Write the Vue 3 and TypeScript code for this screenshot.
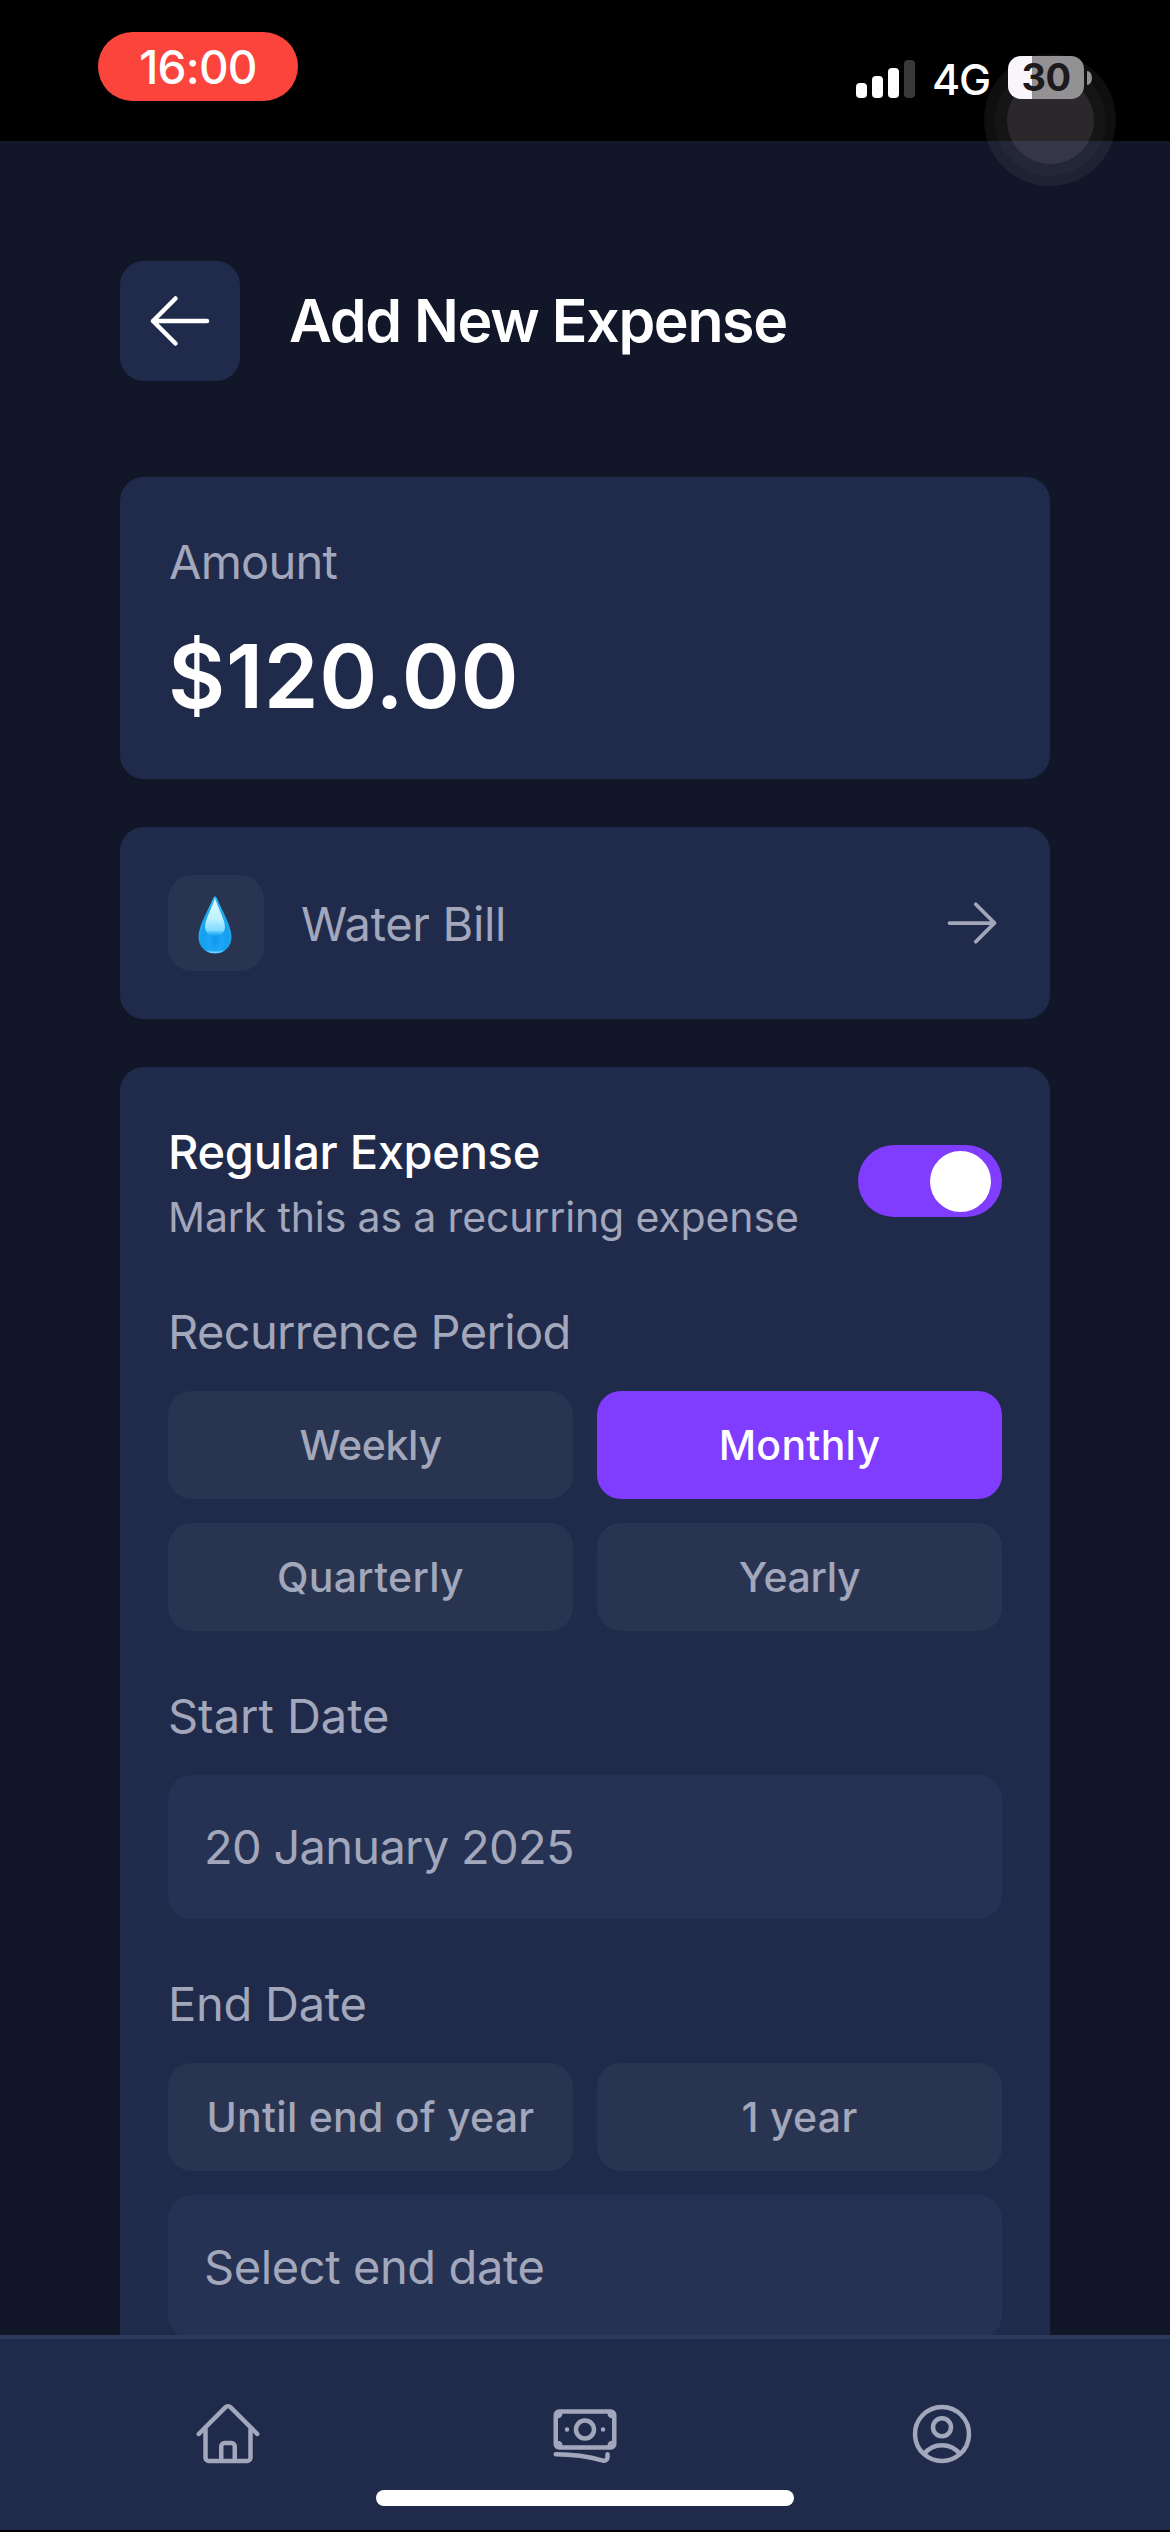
<script setup lang="ts">
import { ref } from 'vue'

interface Option {
  label: string
  tracking: string
}

const periods: Option[] = [
  { label: 'Weekly', tracking: 'snug' },
  { label: 'Monthly', tracking: 'loose' },
  { label: 'Quarterly', tracking: 'loose' },
  { label: 'Yearly', tracking: 'snug' },
]
const endPresets: Option[] = [
  { label: 'Until end of year', tracking: 'loose' },
  { label: '1 year', tracking: 'loose' },
]

const amount = ref('$120.00')
const category = ref('Water Bill')
const recurring = ref(true)
const period = ref('Monthly')
const endPreset = ref('')
const startDate = ref('20 January 2025')
</script>

<template>
  <div class="screen">
    <header class="status">
      <span class="clock">16:00</span>
      <div class="indicators">
        <div class="signal">
          <i class="bar b1"></i>
          <i class="bar b2"></i>
          <i class="bar b3"></i>
          <i class="bar b4"></i>
        </div>
        <span class="network">4G</span>
        <div class="battery"><span>30</span></div>
        <i class="nub"></i>
      </div>
      <div class="touch"><div class="touch-mid"><div class="touch-core"></div></div></div>
    </header>

    <main class="content">
      <div class="heading">
        <button class="back" type="button" aria-label="Back">
          <svg viewBox="0 0 24 24" width="72" height="72">
            <path d="M10.5 19.5 3 12m0 0 7.5-7.5M3 12h18" />
          </svg>
        </button>
        <h1>Add New Expense</h1>
      </div>

      <section class="card amount-card">
        <p class="label t-amount">Amount</p>
        <p class="amount">{{ amount }}</p>
      </section>

      <section class="card category-card">
        <div class="tile">
          <svg viewBox="0 0 36 58" width="36" height="58">
            <defs>
              <radialGradient id="dropBody" cx="0.5" cy="0.76" r="0.62">
                <stop offset="0" stop-color="#0f95ee" />
                <stop offset="0.3" stop-color="#1ba6f8" />
                <stop offset="0.62" stop-color="#14a0ee" />
                <stop offset="1" stop-color="#2bb4f2" />
              </radialGradient>
              <linearGradient id="dropShine" x1="0" y1="0" x2="0" y2="1">
                <stop offset="0" stop-color="#e4f9ff" />
                <stop offset="0.55" stop-color="#bdf1ff" />
                <stop offset="0.85" stop-color="#7fdcff" />
                <stop offset="1" stop-color="#2fb2fb" stop-opacity="0.3" />
              </linearGradient>
              <linearGradient id="dropRim" x1="0" y1="0" x2="0" y2="1">
                <stop offset="0.7" stop-color="#59c9ff" stop-opacity="0" />
                <stop offset="1" stop-color="#6fd2ff" />
              </linearGradient>
            </defs>
            <path
              d="M18 .5c.9 0 1.400.6 1.800 1.500C24 13 34.500 29 34.500 41 34.500 50.500 27.500 57.500 18 57.500S1.500 50.500 1.500 41C1.500 29 12 13 16.200 2c.4-.9.9-1.500 1.800-1.500Z"
              fill="url(#dropBody)"
            />
            <path
              d="M4 47c2.500 6 7.500 9.300 14 9.300S29.500 53 32 47"
              fill="none"
              stroke="url(#dropRim)"
              stroke-width="2"
            />
            <path
              d="M18 2c2 8 10 21 10 29 0 5.500-4.500 9-10 9S8 36.500 8 31C8 23 16 10 18 2Z"
              fill="url(#dropShine)"
            />
          </svg>
        </div>
        <span class="label category">{{ category }}</span>
        <svg class="go" viewBox="0 0 24 24" width="60" height="60">
          <path d="M13.5 4.5 21 12m0 0-7.5 7.5M21 12H3" />
        </svg>
      </section>

      <section class="card form-card">
        <div class="toggle-row">
          <div>
            <p class="toggle-title">Regular Expense</p>
            <p class="toggle-hint">Mark this as a recurring expense</p>
          </div>
          <button
            class="switch"
            :class="{ on: recurring }"
            type="button"
            role="switch"
            :aria-checked="recurring"
            @click="recurring = !recurring"
          >
            <i class="knob"></i>
          </button>
        </div>

        <div class="field">
          <p class="label t-period">Recurrence Period</p>
          <div class="options">
            <button
              v-for="p in periods"
              :key="p.label"
              type="button"
              class="option"
              :class="[p.tracking, { active: p.label === period }]"
              @click="period = p.label"
            >
              {{ p.label }}
            </button>
          </div>
        </div>

        <div class="field">
          <p class="label t-start">Start Date</p>
          <div class="input t-value">{{ startDate }}</div>
        </div>

        <div class="field">
          <p class="label t-end">End Date</p>
          <div class="options">
            <button
              v-for="p in endPresets"
              :key="p.label"
              type="button"
              class="option"
              :class="[p.tracking, { active: p.label === endPreset }]"
              @click="endPreset = p.label"
            >
              {{ p.label }}
            </button>
          </div>
          <div class="input t-select">Select end date</div>
        </div>
      </section>
    </main>

    <nav class="tabs">
      <div class="tab-row">
        <a class="tab" aria-label="Home">
          <svg viewBox="0 0 24 24" width="72" height="72">
            <path
              d="m2.250 12 8.954-8.955c.440-.439 1.152-.439 1.591 0L21.750 12M4.500 9.750v10.125c0 .621.504 1.125 1.125 1.125H9.750v-4.875c0-.621.504-1.125 1.125-1.125h2.250c.621 0 1.125.504 1.125 1.125V21h4.125c.621 0 1.125-.504 1.125-1.125V9.750M8.250 21h8.250"
            />
          </svg>
        </a>
        <a class="tab" aria-label="Expenses">
          <svg viewBox="0 0 24 24" width="72" height="72">
            <path
              d="M2.250 18.750a60.070 60.070 0 0 1 15.797 2.101c.727.198 1.453-.342 1.453-1.096V18.750M3.750 4.500v.750A.750.750 0 0 1 3 6h-.750m0 0v-.375c0-.621.504-1.125 1.125-1.125H20.250M2.250 6v9m18-10.500v.750c0 .414.336.750.750.750h.750m-1.500-1.500h.375c.621 0 1.125.504 1.125 1.125v9.750c0 .621-.504 1.125-1.125 1.125h-.375m1.500-1.500H21a.750.750 0 0 0-.750.750v.750m0 0H3.750m0 0h-.375a1.125 1.125 0 0 1-1.125-1.125V15m1.500 1.500v-.750A.750.750 0 0 0 3 15h-.750M15 10.500a3 3 0 1 1-6 0 3 3 0 0 1 6 0Zm3 0h.008v.008H18V10.500Zm-12 0h.008v.008H6V10.500Z"
            />
          </svg>
        </a>
        <a class="tab" aria-label="Profile">
          <svg viewBox="0 0 24 24" width="72" height="72">
            <path
              d="M17.982 18.725A7.488 7.488 0 0 0 12 15.750a7.488 7.488 0 0 0-5.982 2.975m11.963 0a9 9 0 1 0-11.963 0m11.963 0A8.966 8.966 0 0 1 12 21a8.966 8.966 0 0 1-5.982-2.275M15 9.750a3 3 0 1 1-6 0 3 3 0 0 1 6 0Z"
            />
          </svg>
        </a>
      </div>
      <i class="home-indicator"></i>
    </nav>
  </div>
</template>

<style>
body {
  background: #000;
}
</style>

<style scoped>
.screen {
  position: relative;
  z-index: 0;
  display: flex;
  flex-direction: column;
  width: 1170px;
  height: 2532px;
  overflow: hidden;
  background: #111628;
  border-bottom: 2px solid #000;
  box-sizing: border-box;
  color: #fff;
  font-family: Inter, 'Liberation Sans', sans-serif;
}

p,
h1 {
  margin: 0;
}

button {
  padding: 0;
  border: 0;
  color: inherit;
  font-family: inherit;
}

svg {
  display: block;
  flex: none;
}

/* Status bar */
.status {
  position: relative;
  z-index: 1;
  display: flex;
  flex: none;
  align-items: flex-start;
  justify-content: space-between;
  box-sizing: border-box;
  height: 141px;
  padding: 32px 78px 0 98px;
  background: #000;
}

.clock {
  width: 200px;
  height: 69px;
  border-radius: 35px;
  background: #fb453c;
  font-size: 46px;
  font-weight: 500;
  line-height: 71px;
  letter-spacing: -0.8px;
  text-align: center;
}

.indicators {
  position: relative;
  z-index: 2;
  display: flex;
  align-items: center;
  height: 43px;
  margin-top: 24px;
}

.signal {
  display: flex;
  align-items: flex-end;
  gap: 5px;
  height: 38px;
  margin-top: 3px;
}

.bar {
  width: 11px;
  border-radius: 4px;
  background: #fff;
}

.b1 {
  height: 15px;
}

.b2 {
  height: 22px;
}

.b3 {
  height: 30px;
}

.b4 {
  height: 38px;
  background: #39373a;
}

.network {
  width: 93px;
  padding-left: 17px;
  box-sizing: border-box;
  margin-top: 4px;
  font-size: 43px;
  font-weight: 500;
  line-height: 43px;
  letter-spacing: -1.2px;
}

.battery {
  width: 76px;
  height: 43px;
  border-radius: 13px;
  background: linear-gradient(90deg, #f8f6fa 24px, #949195 24px);
  color: #1c1a1d;
  font-size: 38px;
  font-weight: 700;
  line-height: 43px;
  letter-spacing: -0.5px;
  text-align: center;
}

.nub {
  width: 5px;
  height: 14px;
  margin-left: 3px;
  border-radius: 0 5px 5px 0 / 0 7px 7px 0;
  background: #949195;
}

/* Assistive touch button floating over the corner */
.touch,
.touch-mid,
.touch-core {
  display: flex;
  align-items: center;
  justify-content: center;
  border-radius: 50%;
}

.touch {
  position: absolute;
  z-index: 1;
  top: 54px;
  left: 984px;
  width: 132px;
  height: 132px;
  background: rgba(150, 145, 152, 0.1);
}

.touch-mid {
  width: 111px;
  height: 111px;
  background: rgba(150, 145, 152, 0.05);
}

.touch-core {
  width: 87px;
  height: 87px;
  background: rgba(150, 145, 150, 0.16);
}

/* Page */
.content {
  display: flex;
  flex: 1;
  flex-direction: column;
  gap: 48px;
  min-height: 0;
  overflow: hidden;
  padding: 120px 120px 0;
}

.heading {
  display: flex;
  flex: none;
  align-items: center;
  gap: 49px;
  margin-bottom: 48px;
}

.back {
  display: flex;
  align-items: center;
  justify-content: center;
  width: 120px;
  height: 120px;
  border-radius: 24px;
  background: #202b4b;
}

h1 {
  font-size: 59px;
  font-weight: 600;
  line-height: 84px;
  letter-spacing: -1.36px;
}

path {
  stroke-linecap: round;
  stroke-linejoin: round;
}

.back path,
.go path,
.tab path {
  fill: none;
  stroke: currentColor;
  stroke-width: 1.5;
}

.card {
  flex: none;
  box-sizing: border-box;
  padding: 48px;
  border-radius: 24px;
  background: #202b4b;
}

.label {
  padding-top: 2px;
  color: #a2a7bb;
  font-size: 47px;
  line-height: 70px;
}

.t-amount {
  padding-left: 1px;
  letter-spacing: -0.79px;
}

.t-period {
  letter-spacing: -0.64px;
}

.t-start {
  letter-spacing: -0.04px;
}

.t-end {
  letter-spacing: -0.25px;
}

.amount-card {
  height: 302px;
}

.amount {
  margin-top: 24px;
  font-size: 88px;
  font-weight: 600;
  line-height: 110px;
  letter-spacing: 0.66px;
}

.category-card {
  display: flex;
  align-items: center;
  height: 192px;
}

.tile {
  display: flex;
  align-items: center;
  justify-content: center;
  width: 96px;
  height: 96px;
  margin-right: 37px;
  padding-top: 4px;
  box-sizing: border-box;
  border-radius: 24px;
  background: #293450;
}

.tile svg {
  margin-right: 3px;
}

.category {
  letter-spacing: -0.34px;
}

.go {
  margin-left: auto;
  color: #a2a7bb;
}

.form-card {
  display: flex;
  flex-direction: column;
  gap: 48px;
}

.toggle-row {
  display: flex;
  align-items: center;
  justify-content: space-between;
}

.toggle-title {
  padding-top: 2px;
  font-size: 47px;
  font-weight: 500;
  line-height: 70px;
  letter-spacing: -0.3px;
}

.toggle-hint {
  color: #a2a7bb;
  font-size: 41px;
  line-height: 60px;
  letter-spacing: -0.14px;
}

.switch {
  display: flex;
  align-items: center;
  box-sizing: border-box;
  width: 144px;
  height: 72px;
  padding: 0 11px;
  border-radius: 36px;
  background: #293450;
}

.switch.on {
  justify-content: flex-end;
  background: #803dff;
}

.knob {
  width: 61px;
  height: 61px;
  border-radius: 50%;
  background: #fff;
}

.field {
  display: flex;
  flex-direction: column;
  gap: 24px;
}

.options {
  display: grid;
  grid-template-columns: 1fr 1fr;
  gap: 24px;
}

.option {
  height: 108px;
  border-radius: 24px;
  background: #293450;
  color: #a2a7bb;
  font-size: 41px;
  font-weight: 500;
  line-height: 60px;
}

.option.snug {
  letter-spacing: -0.35px;
}

.option.loose {
  letter-spacing: 0.28px;
}

.option.active {
  background: #803dff;
  color: #fff;
}

.input {
  box-sizing: border-box;
  height: 144px;
  padding: 36px;
  border-radius: 24px;
  background: #263253;
  color: #a2a7bb;
  font-size: 47px;
  line-height: 72px;
}

.t-value {
  letter-spacing: -0.7px;
}

.t-select {
  letter-spacing: -0.4px;
}

/* Bottom navigation */
.tabs {
  display: flex;
  flex: none;
  flex-direction: column;
  align-items: center;
  box-sizing: border-box;
  height: 195px;
  border-top: 4px solid #2c395d;
  background: #202b4b;
}

.tab-row {
  display: grid;
  grid-template-columns: repeat(3, 357px);
  padding-top: 59px;
}

.tab {
  display: flex;
  justify-content: center;
  color: #a2a7bb;
}

.home-indicator {
  width: 418px;
  height: 16px;
  margin-top: 20px;
  border-radius: 8px;
  background: #fff;
}
</style>
